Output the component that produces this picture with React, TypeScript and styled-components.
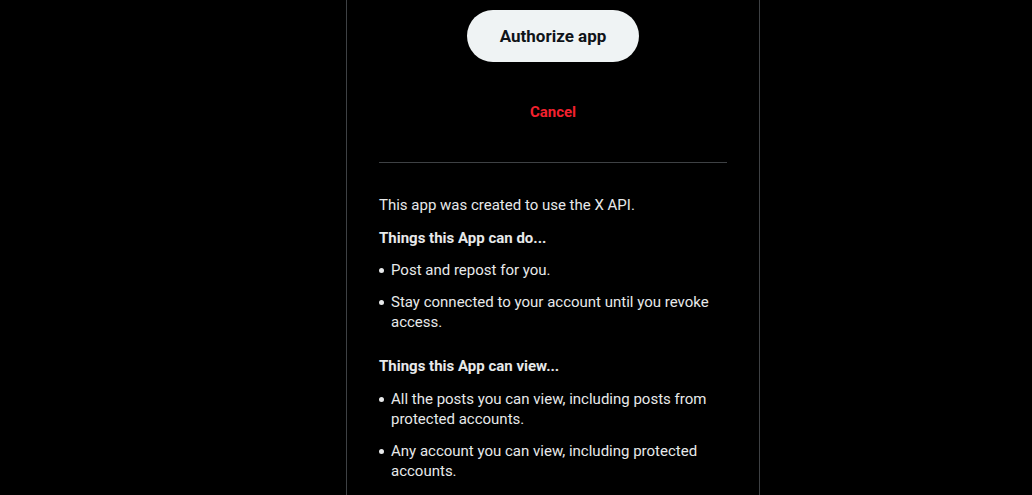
import React from 'react';
import styled, { createGlobalStyle } from 'styled-components';

const GlobalStyle = createGlobalStyle`
  html, body {
    margin: 0;
    padding: 0;
    background: #000000;
  }
  body {
    font-family: Roboto, "Liberation Sans", sans-serif;
    color: #e7e9ea;
  }
`;

const Page = styled.div`
  display: grid;
  grid-template-columns: 346px 414px 1fr;
  min-height: 495px;
  background: #000000;
`;

const Panel = styled.div`
  grid-column: 2;
  box-sizing: border-box;
  border-left: 1px solid #3e4144;
  border-right: 1px solid #3e4144;
  padding: 10px 32px 0;
  display: flex;
  flex-direction: column;
`;

const Actions = styled.div`
  display: flex;
  flex-direction: column;
  align-items: center;
  gap: 24px;
`;

const PillButton = styled.button<{ $danger?: boolean }>`
  height: 52px;
  padding: 0 33px;
  border: none;
  border-radius: 26px;
  font-family: Roboto, "Liberation Sans", sans-serif;
  font-size: 17px;
  font-weight: 700;
  cursor: pointer;
  background: ${(p) => (p.$danger ? 'transparent' : '#eff3f4')};
  color: ${(p) => (p.$danger ? '#f4212e' : '#0f1419')};
  ${(p) => p.$danger && 'font-size: 15px;'}
`;

const Divider = styled.hr`
  width: 100%;
  margin: 24px 0 32px;
  border: none;
  border-top: 1px solid #3e4144;
`;

const Details = styled.div`
  font-size: 15px;
  line-height: 20px;
`;

const Intro = styled.p`
  margin: 0 0 13px;
`;

const Heading = styled.h3`
  margin: 0 0 12px;
  font-size: 15px;
  line-height: 20px;
  font-weight: 700;
`;

const List = styled.ul`
  list-style: none;
  margin: 0 0 24px;
  padding: 0;
  display: flex;
  flex-direction: column;
  gap: 12px;
`;

const Section = styled.div`
  & + & ${Heading} {
    margin-bottom: 13px;
  }
`;

const Item = styled.li`
  display: flex;
  &::before {
    content: '';
    flex: none;
    width: 5px;
    height: 5px;
    border-radius: 50%;
    background: #e7e9ea;
    margin: 8px 7px 0 0;
  }
`;

const sections = [
  {
    title: 'Things this App can do...',
    items: ['Post and repost for you.', 'Stay connected to your account until you revoke access.'],
  },
  {
    title: 'Things this App can view...',
    items: [
      'All the posts you can view, including posts from protected accounts.',
      'Any account you can view, including protected accounts.',
    ],
  },
];

const App: React.FC = () => {
  return (
    <Page>
      <GlobalStyle />
      <Panel>
        <Actions>
          <PillButton>Authorize app</PillButton>
          <PillButton $danger>Cancel</PillButton>
        </Actions>
        <Divider />
        <Details>
          <Intro>This app was created to use the X API.</Intro>
          {sections.map((s) => (
            <Section key={s.title}>
              <Heading>{s.title}</Heading>
              <List>
                {s.items.map((it) => (
                  <Item key={it}>{it}</Item>
                ))}
              </List>
            </Section>
          ))}
        </Details>
      </Panel>
    </Page>
  );
};

export default App;
